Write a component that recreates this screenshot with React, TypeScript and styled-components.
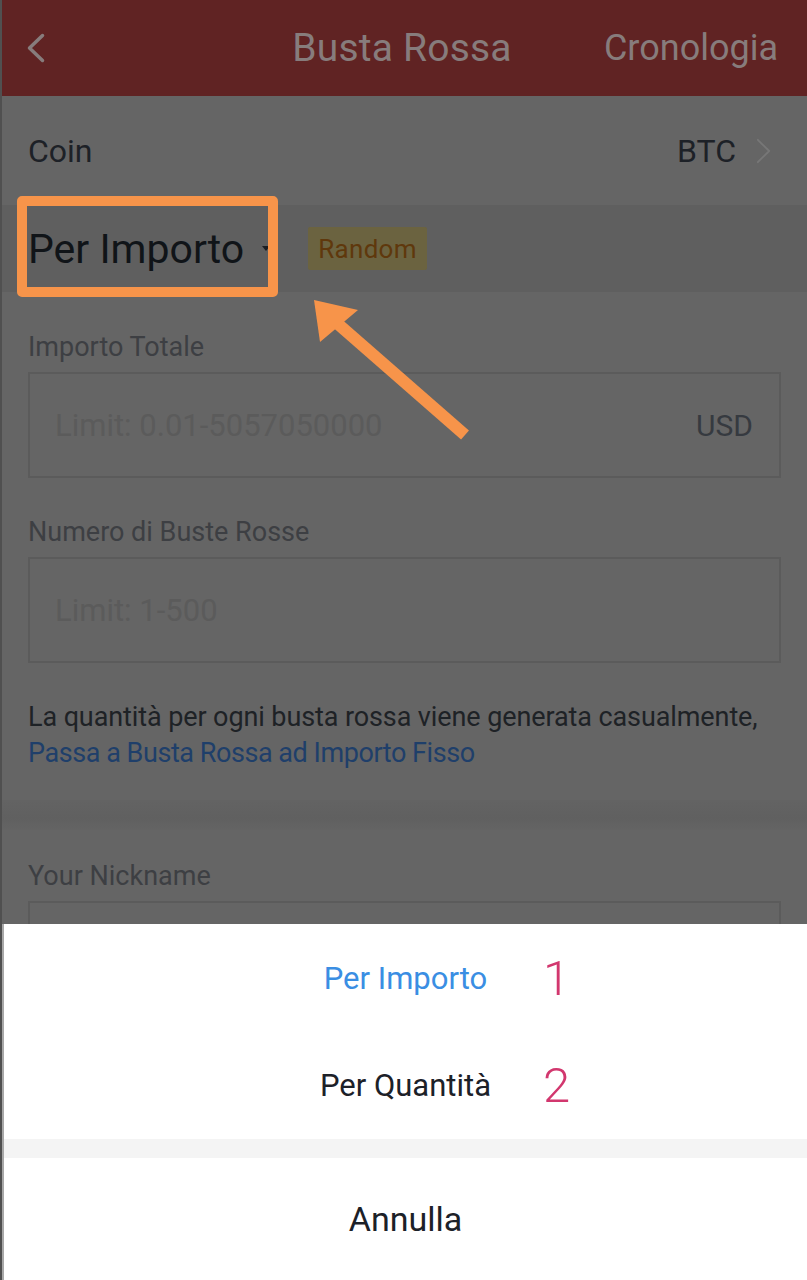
import React from 'react';
import styled, { createGlobalStyle } from 'styled-components';

const GlobalStyle = createGlobalStyle`
  * { box-sizing: border-box; }
  body {
    margin: 0;
    font-family: Roboto, "Noto Sans", sans-serif;
    background: #666666;
  }
`;

const ACCENT = '#f7944a';

const Page = styled.div`
  position: relative;
  width: 807px;
  min-height: 1280px;
  background: #656565;
  border-left: 2px solid #505050;
  overflow: hidden;
`;

const Header = styled.header`
  height: 96px;
  background: #602323;
  display: grid;
  grid-template-columns: 1fr auto 1fr;
  align-items: center;
  padding: 0 29px 0 24px;
  color: #877c7c;
`;

const BackButton = styled.div`
  display: flex;
  align-items: center;
`;

const Title = styled.div`
  font-size: 39px;
  letter-spacing: 0.2px;
`;

const HeaderAction = styled.div`
  justify-self: end;
  font-size: 36px;
`;

const CoinRow = styled.div`
  height: 109px;
  display: flex;
  align-items: center;
  justify-content: space-between;
  padding: 0 36px 0 26px;
  font-size: 32px;
  color: #1d2127;
`;

const CoinValue = styled.div`
  display: flex;
  align-items: center;
  gap: 20px;
`;

const ModeBand = styled.div`
  height: 87px;
  background: #5f5f5f;
  display: flex;
  align-items: center;
  padding: 0 26px;
`;

const ModeLabel = styled.div`
  font-size: 41px;
  color: #101418;
  display: flex;
  align-items: center;
  gap: 18px;
`;

const Badge = styled.span`
  margin-left: 38px;
  height: 43px;
  padding: 0 10px;
  display: flex;
  align-items: center;
  background: #6b6340;
  color: #5f380c;
  font-size: 26px;
  letter-spacing: 0.3px;
  border-radius: 2px;
`;

const Section = styled.section`
  padding: 37px 26px 29px;
`;

const Label = styled.div<{ mt?: number }>`
  font-size: 27px;
  line-height: 36px;
  color: #3d3f43;
  margin-top: ${p => p.mt ?? 0}px;
  margin-bottom: 7px;
`;

const InputBox = styled.div`
  height: 106px;
  border: 2px solid #5b5b5b;
  display: flex;
  align-items: center;
  justify-content: space-between;
  padding: 0 26px 0 25px;
  font-size: 31px;
`;

const Placeholder = styled.span`
  color: #5b5b5b;
`;

const Unit = styled.span`
  color: #363a40;
  font-size: 30px;
`;

const Note = styled.p`
  margin: 36px 0 0;
  font-size: 27px;
  line-height: 36px;
  color: #1e2226;
  letter-spacing: -0.1px;
`;

const NoteLink = styled.span`
  color: #1f3f6a;
  letter-spacing: -0.45px;
`;

const Divider = styled.div`
  height: 30px;
  background: linear-gradient(#636363, #606060 60%, #646464);
`;

const NickSection = styled.section`
  padding: 28px 26px 0;
`;

const Annotation = styled.div`
  position: absolute;
  left: 15px;
  top: 196px;
  width: 261px;
  height: 101px;
  border: 10px solid ${ACCENT};
  border-radius: 5px;
`;

const ArrowSvg = styled.svg`
  position: absolute;
  left: 300px;
  top: 290px;
`;

const Sheet = styled.div`
  position: absolute;
  left: 0;
  right: 0;
  bottom: 0;
  background: #ffffff;
  border-left: 2px solid #a8a8a8;
`;

const Option = styled.div<{ active?: boolean; h: number; size?: number }>`
  position: relative;
  height: ${p => p.h}px;
  display: flex;
  align-items: center;
  justify-content: center;
  font-size: ${p => p.size ?? 31}px;
  color: ${p => (p.active ? '#3a8ee3' : '#1c2128')};
`;

const StepNumber = styled.span`
  position: absolute;
  left: 539px;
  font-size: 49px;
  font-weight: 300;
  color: #d2376e;
`;

const SheetGap = styled.div`
  height: 19px;
  background: #f4f4f4;
`;

const Chevron = ({ dir, color, w, h, sw }: { dir: 'left' | 'right'; color: string; w: number; h: number; sw: number }) => (
  <svg width={w} height={h} viewBox={`0 0 ${w} ${h}`} fill="none">
    <polyline
      points={dir === 'left' ? `${w - sw},${sw} ${sw},${h / 2} ${w - sw},${h - sw}` : `${sw},${sw} ${w - sw},${h / 2} ${sw},${h - sw}`}
      stroke={color}
      strokeWidth={sw}
      strokeLinecap="round"
      strokeLinejoin="round"
    />
  </svg>
);

export default function App() {
  return (
    <>
      <GlobalStyle />
      <Page>
        <Header>
          <BackButton>
            <Chevron dir="left" color="#877c7c" w={20} h={32} sw={3.5} />
          </BackButton>
          <Title>Busta Rossa</Title>
          <HeaderAction>Cronologia</HeaderAction>
        </Header>

        <CoinRow>
          <span>Coin</span>
          <CoinValue>
            BTC
            <Chevron dir="right" color="#777777" w={15} h={26} sw={1.8} />
          </CoinValue>
        </CoinRow>

        <ModeBand>
          <ModeLabel>
            Per Importo
            <svg width="8" height="6" viewBox="0 0 8 6">
              <polygon points="0,0 8,0 4,5" fill="#1a1d22" />
            </svg>
          </ModeLabel>
          <Badge>Random</Badge>
        </ModeBand>

        <Section>
          <Label>Importo Totale</Label>
          <InputBox>
            <Placeholder>Limit: 0.01-5057050000</Placeholder>
            <Unit>USD</Unit>
          </InputBox>
          <Label mt={36}>Numero di Buste Rosse</Label>
          <InputBox>
            <Placeholder>Limit: 1-500</Placeholder>
          </InputBox>
          <Note>
            La quantità per ogni busta rossa viene generata casualmente,
            <br />
            <NoteLink>Passa a Busta Rossa ad Importo Fisso</NoteLink>
          </Note>
        </Section>

        <Divider />

        <NickSection>
          <Label>Your Nickname</Label>
          <InputBox />
        </NickSection>

        <Annotation />
        <ArrowSvg width="180" height="160" viewBox="0 0 180 160">
          <line x1="36" y1="34" x2="163" y2="145" stroke={ACCENT} strokeWidth="12" />
          <polygon points="12,10 18,52 56,20" fill={ACCENT} />
        </ArrowSvg>

        <Sheet>
          <Option active h={108}>
            Per Importo
            <StepNumber>1</StepNumber>
          </Option>
          <Option h={107}>
            Per Quantità
            <StepNumber>2</StepNumber>
          </Option>
          <SheetGap />
          <Option h={122} size={34}>Annulla</Option>
        </Sheet>
      </Page>
    </>
  );
}
